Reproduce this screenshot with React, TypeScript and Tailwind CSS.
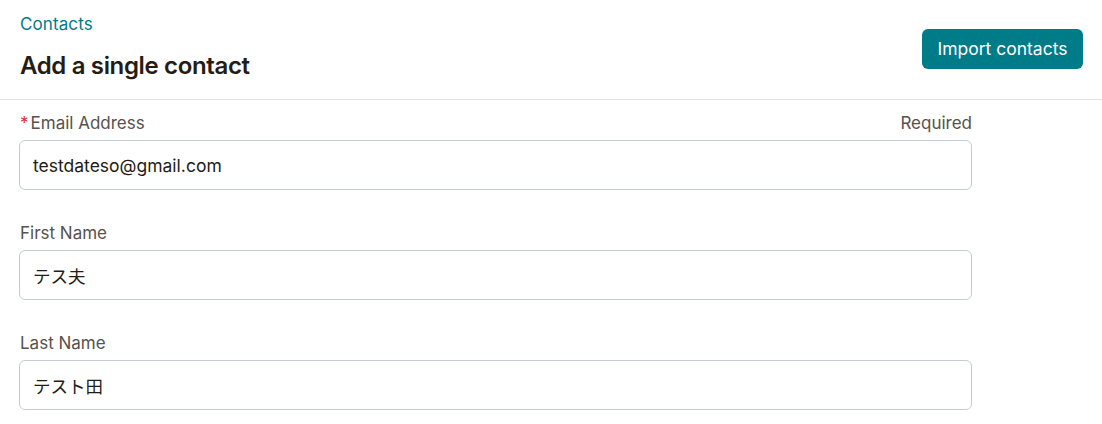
import { useState } from 'react';

const fields = [
    { label: 'Email Address', value: 'testdateso@gmail.com', required: true },
    { label: 'First Name', value: 'テス夫', required: false },
    { label: 'Last Name', value: 'テスト田', required: false },
];

export default function App() {
    const [values, setValues] = useState(fields.map((f) => f.value));

    return (
        <div className="min-h-[424px] bg-white text-[#241c15] font-['Inter','Noto_Sans_CJK_JP',sans-serif]">
            <header className="flex justify-between items-start border-b border-[#e3e3e6] pl-5 pr-[19px] pt-3 pb-[17px]">
                <div className="flex flex-col gap-[14px]">
                    <a href="#" className="text-[17px] leading-6 text-[#007c89] tracking-[0.1px]">Contacts</a>
                    <h1 className="text-[24px] leading-8 font-semibold tracking-[-0.35px]">Add a single contact</h1>
                </div>
                <button className="mt-[17px] h-10 w-[161px] rounded-md bg-[#007c89] text-[17.5px] text-white">
                    Import contacts
                </button>
            </header>

            <form className="w-[972px] pl-[19px] pt-[11px] flex flex-col gap-[31px]">
                {fields.map((f, i) => (
                    <div key={f.label} className="flex flex-col gap-[5px]">
                        <div className="flex justify-between items-center text-[17px] leading-6 text-[#57524d]">
                            <label className="flex items-center">
                                {f.required && <span className="text-[#d93025] mr-[2px] ml-[1px]">*</span>}
                                <span className={f.required ? '' : 'ml-[1px]'}>{f.label}</span>
                            </label>
                            {f.required && <span>Required</span>}
                        </div>
                        <input
                            value={values[i]}
                            onChange={(e) => setValues(values.map((v, j) => (j === i ? e.target.value : v)))}
                            className="h-[50px] w-full rounded-md border border-[#c6cbd6] bg-white px-[13px] text-[17.5px] text-[#241c15] outline-none"
                        />
                    </div>
                ))}
            </form>
        </div>
    );
}
